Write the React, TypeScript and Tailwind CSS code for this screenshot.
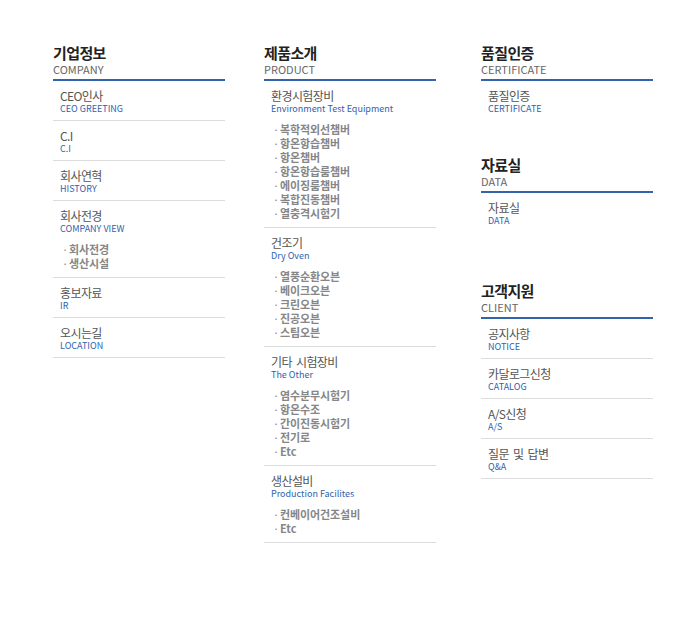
import React from 'react';

type Item = { ko: string; en: string; sub?: string[] };
type Section = { title: string; en: string; items: Item[]; last?: boolean; gap?: string };

const FONT = "font-['Noto_Sans_CJK_KR','Noto_Sans',sans-serif]";

const company: Section[] = [
  {
    title: '기업정보',
    en: 'COMPANY',
    items: [
      { ko: 'CEO인사', en: 'CEO GREETING' },
      { ko: 'C.I', en: 'C.I' },
      { ko: '회사연혁', en: 'HISTORY' },
      { ko: '회사전경', en: 'COMPANY VIEW', sub: ['회사전경', '생산시설'] },
      { ko: '홍보자료', en: 'IR' },
      { ko: '오시는길', en: 'LOCATION' },
    ],
  },
];

const product: Section[] = [
  {
    title: '제품소개',
    en: 'PRODUCT',
    items: [
      {
        ko: '환경시험장비',
        en: 'Environment Test Equipment',
        sub: ['복학적외선챔버', '항온항습챔버', '항온챔버', '항온항습룸챔버', '에이징룸챔버', '복합진동챔버', '열충격시험기'],
      },
      { ko: '건조기', en: 'Dry Oven', sub: ['열풍순환오븐', '베이크오븐', '크린오븐', '진공오븐', '스팀오븐'] },
      { ko: '기타 시험장비', en: 'The Other', sub: ['염수분무시험기', '항온수조', '간이진동시험기', '전기로', 'Etc'] },
      { ko: '생산설비', en: 'Production Facilites', sub: ['컨베이어건조설비', 'Etc'] },
    ],
  },
];

const support: Section[] = [
  { title: '품질인증', en: 'CERTIFICATE', items: [{ ko: '품질인증', en: 'CERTIFICATE' }], last: true },
  { title: '자료실', en: 'DATA', items: [{ ko: '자료실', en: 'DATA' }], last: true, gap: 'mt-[35px]' },
  {
    title: '고객지원',
    en: 'CLIENT',
    gap: 'mt-[49px]',
    items: [
      { ko: '공지사항', en: 'NOTICE' },
      { ko: '카달로그신청', en: 'CATALOG' },
      { ko: 'A/S신청', en: 'A/S' },
      { ko: '질문 및 답변', en: 'Q&A' },
    ],
  },
];

function MenuItem({ item, noBorder }: { item: Item; noBorder?: boolean }) {
  return (
    <li className={`pl-[7px] pt-[8px] ${item.sub ? 'pb-[7px]' : 'pb-[5px]'} ${noBorder ? '' : 'border-b border-[#dcdcdc]'}`}>
      <p className="text-[12px] leading-[14px] font-normal tracking-[-0.6px] [word-spacing:2px] text-[#555]">{item.ko}</p>
      <p className="text-[9px] leading-[12px] font-normal text-[#2f62ad]">{item.en}</p>
      {item.sub && (
        <ul className="mt-[7px]">
          {item.sub.map((s) => (
            <li key={s} className="flex pl-px text-[11px] leading-[14px] font-bold tracking-[-0.1px] text-[#868686]">
              <span className="w-[8px] text-center font-normal">·</span>
              <span>{s}</span>
            </li>
          ))}
        </ul>
      )}
    </li>
  );
}

function MenuSection({ section }: { section: Section }) {
  return (
    <div className={section.gap ?? ''}>
      <div className="border-b-2 border-[#3263ab] pb-[3px]">
        <h2 className="text-[15px] leading-[20px] font-bold tracking-[-0.6px] text-[#222]">{section.title}</h2>
        <p className="text-[11px] leading-[13px] text-[#666]">{section.en}</p>
      </div>
      <ul>
        {section.items.map((it) => (
          <MenuItem key={it.ko + it.en} item={it} noBorder={section.last} />
        ))}
      </ul>
    </div>
  );
}

function Column({ sections, className }: { sections: Section[]; className?: string }) {
  return (
    <div className={`w-[172px] shrink-0 ${className ?? ''}`}>
      {sections.map((s) => (
        <MenuSection key={s.title} section={s} />
      ))}
    </div>
  );
}

export default function App() {
  return (
    <div className={`w-[700px] h-[627px] bg-white ${FONT}`}>
      <div className="flex pt-[43px] pl-[53px]">
        <Column sections={company} />
        <Column sections={product} className="ml-[39px]" />
        <Column sections={support} className="ml-[45px]" />
      </div>
    </div>
  );
}
